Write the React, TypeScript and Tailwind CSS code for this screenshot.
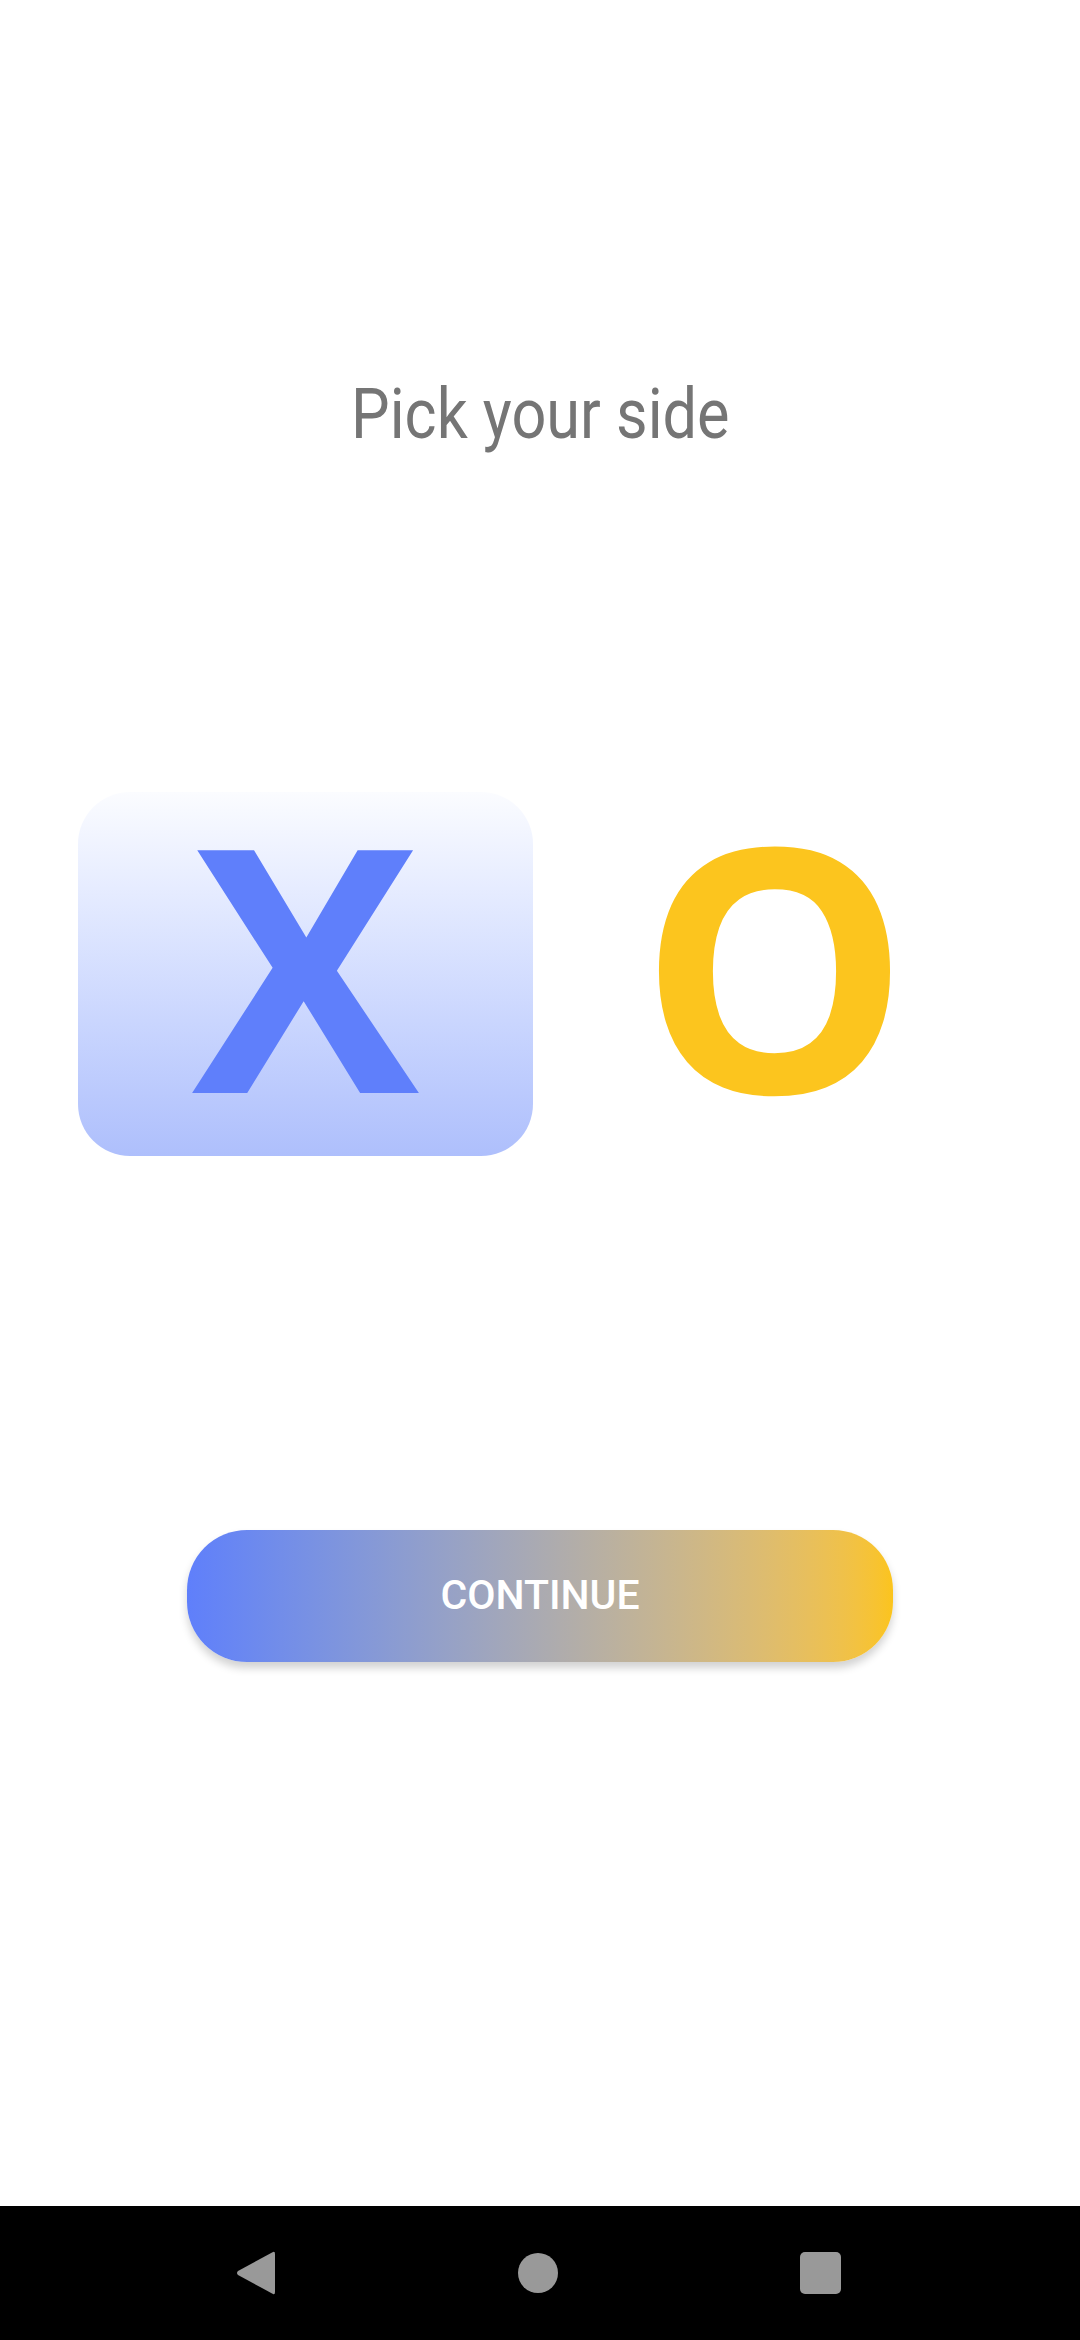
const App = () => {
  return (
    <div className="flex h-[2340px] w-[1080px] flex-col bg-white font-['Roboto',sans-serif]">
      <main className="flex flex-1 flex-col">
        <h1 className="mt-[379px] text-center text-[70px] leading-[70px] font-normal text-[#757575]">
          <span className="inline-block scale-x-[0.875]">Pick your side</span>
        </h1>

        {/* side picker */}
        <div className="mt-[343px] flex gap-[14px] px-[78px]">
          <button className="flex h-[364px] w-[455px] items-center justify-center rounded-[52px] bg-gradient-to-b from-[#fbfcff] to-[#aebffc]">
            <span className="mb-[24px] font-['Open_Sans',sans-serif] text-[340px] leading-[340px] font-bold text-[#5f7ffb]">X</span>
          </button>
          <button className="flex h-[364px] w-[455px] items-center justify-center">
            <span className="mb-[24px] font-['Open_Sans',sans-serif] text-[340px] leading-[340px] font-bold text-[#fcc51e]">O</span>
          </button>
        </div>

        <button className="mx-auto mt-[374px] flex h-[132px] w-[706px] items-center justify-center rounded-[60px] bg-gradient-to-r from-[#5f7ffb] to-[#fbc41c] shadow-[0_6px_8px_rgba(0,0,0,0.18)]">
          <span className="text-[41px] font-medium text-white">CONTINUE</span>
        </button>
      </main>

      <nav className="flex h-[134px] items-center bg-black">
        <div className="flex w-full items-center justify-between pr-[239px] pl-[236px]">
          <svg width="40" height="46" viewBox="0 0 40 46">
            <path d="M37 2 Q39 1 39 4 L39 42 Q39 45 37 44 L2 25 Q0 23 2 21 Z" fill="#999" />
          </svg>
          <div className="h-[40px] w-[40px] rounded-full bg-[#999]" />
          <div className="h-[42px] w-[41px] rounded-[5px] bg-[#999]" />
        </div>
      </nav>
    </div>
  );
};

export default App;
